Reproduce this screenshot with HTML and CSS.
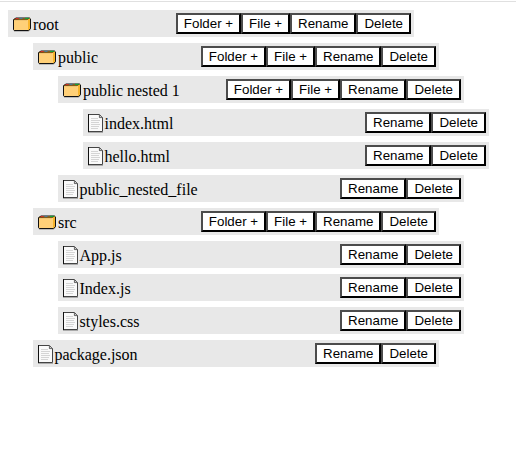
FILE: index.html
```
<!DOCTYPE html>
<html lang="en">
<head>
<meta charset="utf-8">
<title>File explorer</title>
<link rel="stylesheet" href="styles.css">
</head>
<body>
<svg class="sprite" aria-hidden="true">
  <symbol id="folder" viewBox="0 0 20 16">
    <path d="M1 14.4h14.5l2-1.6" fill="none" stroke="#aaa" stroke-width=".8"/>
    <path d="M.5 2.6 3 1h13.5l1 .9v9.9l-2 1.7H1.2l-.7-.7z" fill="#f8b42c" stroke="#111"/>
    <path d="M2.5 1.7h3" stroke="#d92a2a" stroke-width="1.2"/>
    <path d="M6.5 1.4h3" stroke="#4a7896" stroke-width="1.2"/>
    <path d="M12 1.4h4" stroke="#14a53b" stroke-width="1.2"/>
    <path d="M1 3h14v10H1z" fill="#ffd078"/>
    <path d="M1 2.6h13l1.4-.7" fill="none" stroke="#3a2a10" stroke-width=".7"/>
  </symbol>
  <symbol id="file" viewBox="0 0 17 20">
    <path d="M0 18.5h15" fill="none" stroke="#aaa"/>
    <path d="M.5 .5h11l3 3v14H.5z" fill="#fafafa" stroke="#444"/>
    <path d="M.5 0v18" stroke="#111"/>
    <path d="M11.4 1v2.6h3" fill="#ccc" stroke="#444" stroke-width=".8"/>
    <path d="M3 4.5h7M3 6.5h9M3 8.5h8M3 10.5h9M3 12.5h8M3 14.5h7" stroke="#ccc" stroke-width=".8"/>
  </symbol>
</svg>
<main class="tree"></main>
<script src="tree.js"></script>
</body>
</html>
```
FILE: styles.css
```
body {
  margin: 0;
  border-top: 1px solid #fff;
  background: #fff;
  font: 16px/18px "Liberation Serif", serif;
  color: #000;
}
.sprite { display: none; }
.tree {
  border-top: 1px solid #e0e0e0;
  padding: 8px 8px 0;
}
.children { padding-left: 25px; }
.row {
  box-sizing: border-box;
  display: flex;
  align-items: flex-start;
  justify-content: space-between;
  width: 406px;
  height: 27px;
  margin-bottom: 6px;
  padding: 3px 3px 0 5px;
  background: #e8e8e8;
}
.label { display: flex; align-items: flex-start; }
.name { margin-top: 3px; }
.folder-icon { width: 20px; height: 16px; margin-top: 4px; }
.file-icon { width: 17px; height: 20px; margin: 2px -0.5px 0 0; }
.actions { display: flex; }
.actions button {
  box-sizing: border-box;
  height: 21px;
  margin: 0;
  padding: 1px 6px;
  border: 2px solid;
  border-color: #4c4c4c #000 #000 #4c4c4c;
  border-radius: 0;
  background: #fff;
  color: #000;
  font: 13.3333px/15px "Liberation Sans", sans-serif;
}
```
FILE: tree.js
```
const root = {
  name: "root", items: [
    { name: "public", items: [
      { name: "public nested 1", items: [{ name: "index.html" }, { name: "hello.html" }] },
      { name: "public_nested_file" }
    ] },
    { name: "src", items: [{ name: "App.js" }, { name: "Index.js" }, { name: "styles.css" }] },
    { name: "package.json" }
  ]
};

function render(node) {
  const type = node.items ? "folder" : "file";
  const actions = node.items ? ["Folder +", "File +", "Rename", "Delete"] : ["Rename", "Delete"];
  return `<div class="row">
      <div class="label"><svg class="${type}-icon"><use href="#${type}"/></svg><span class="name">${node.name}</span></div>
      <div class="actions">${actions.map(a => `<button>${a}</button>`).join("")}</div>
    </div>${node.items ? `<div class="children">${node.items.map(render).join("")}</div>` : ""}`;
}

document.querySelector(".tree").innerHTML = render(root);
```
